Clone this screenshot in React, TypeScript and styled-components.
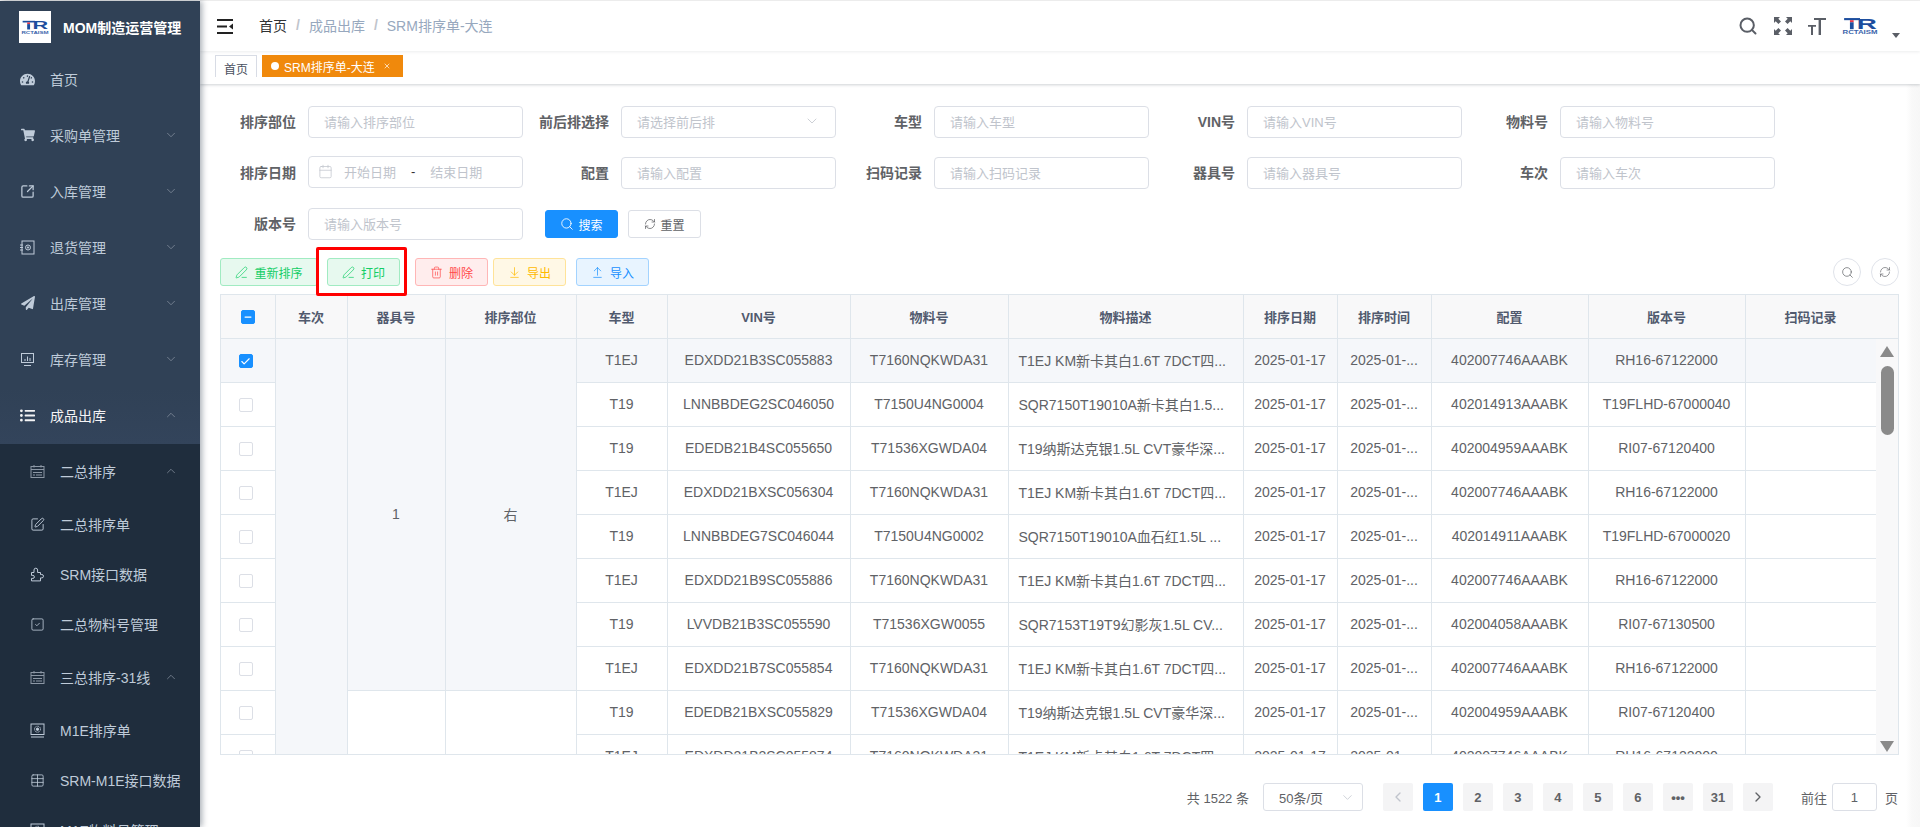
import React, { FC, ReactNode } from 'react';
import styled, { createGlobalStyle } from 'styled-components';
import {
  ChevronDown,
  ChevronUp,
  ChevronLeft,
  ChevronRight,
  Search,
  RefreshCw,
  PenLine,
  Trash2,
  ArrowDownToLine,
  ArrowUpFromLine,
  Calendar,
  Check,
  Minus,
  X,
  SquarePen,
  SquareCheck,
  Table,
} from 'lucide-react';
import { FaTachometerAlt, FaShoppingCart, FaPaperPlane, FaListUl } from 'react-icons/fa';
import { LuSquareArrowOutUpRight } from 'react-icons/lu';

const GlobalStyle = createGlobalStyle`
  html, body {
    margin: 0;
    padding: 0;
    height: 100%;
    overflow: hidden;
    background: #fff;
    font-family: "Liberation Sans", "Noto Sans CJK SC", sans-serif;
  }
`;

const Page = styled.div`
  display: flex;
  height: 827px;
  padding-top: 1px;
  box-sizing: border-box;
  background: #efefef;
`;

const Sidebar = styled.aside`
  flex: 0 0 200px;
  background: #304156;
  overflow: hidden;
  box-shadow: 2px 0 6px rgba(0, 21, 41, 0.35);
  z-index: 2;
`;

const Brand = styled.div`
  display: flex;
  align-items: center;
  height: 51px;
  padding-left: 19px;
  gap: 12px;
  color: #fff;
  font-size: 14px;
  font-weight: 700;
`;

const LogoBox = styled.div`
  display: flex;
  align-items: center;
  justify-content: center;
  width: 32px;
  height: 32px;
  background: #fff;
`;

const SubMenu = styled.div`
  background: #1f2d3d;
`;

const NavRow = styled.div<{ $height: number; $indent: number; $active?: boolean }>`
  display: flex;
  align-items: center;
  box-sizing: border-box;
  height: ${(p) => p.$height}px;
  padding: 0 20px 2px ${(p) => p.$indent}px;
  color: ${(p) => (p.$active ? '#f4f4f5' : '#bfcbd9')};
  font-size: 14px;
  background: ${(p) => (p.$active ? 'linear-gradient(#304156, #33445b)' : 'transparent')};
`;

const NavIcon = styled.span`
  display: flex;
  align-items: center;
  justify-content: center;
  width: 15px;
  margin-right: 15px;
`;

const NavLabel = styled.span`
  flex: 1;
  white-space: nowrap;
`;

const Arrow = styled.span`
  display: flex;
  color: #8c97a5;
  margin-right: 2px;
`;

const Main = styled.main`
  flex: 1;
  display: flex;
  flex-direction: column;
  min-width: 0;
  background: #fff;
`;

const TopBar = styled.header`
  display: flex;
  align-items: center;
  flex: 0 0 50px;
  padding: 0 20px 0 17px;
  background: #fff;
  box-shadow: 0 1px 3px rgba(0, 21, 41, 0.08);
  position: relative;
  z-index: 1;
`;

const Crumbs = styled.nav`
  display: flex;
  align-items: center;
  margin: 0 0 2px 25px;
  font-size: 14px;
  color: #97a8be;
`;

const CrumbHome = styled.span`
  color: #303133;
`;

const CrumbSlash = styled.span`
  margin: 0 9px;
  color: #c0c4cc;
  font-weight: 700;
`;

const TopTools = styled.div`
  display: flex;
  align-items: center;
  margin-left: auto;
  color: #5a5e66;
`;

const ToolSlot = styled.span`
  display: flex;
  margin-right: 16px;
`;

const AvatarCaret = styled.span`
  width: 0;
  height: 0;
  margin: 18px 0 0 14px;
  border-left: 4px solid transparent;
  border-right: 4px solid transparent;
  border-top: 5px solid #5a5e66;
`;

const TabsBar = styled.div`
  display: flex;
  align-items: flex-start;
  flex: 0 0 33px;
  padding: 4px 0 0 15px;
  box-sizing: border-box;
  background: #fff;
  box-shadow: 0 1px 3px rgba(0, 21, 41, 0.18), 0 0 3px rgba(0, 0, 0, 0.04);
  position: relative;
`;

const Tab = styled.div<{ $active?: boolean }>`
  display: flex;
  align-items: center;
  height: 22px;
  box-sizing: border-box;
  margin-right: 5px;
  padding: ${(p) => (p.$active ? '0 12px 0 9px' : '3px 8px 0')};
  font-size: 12px;
  color: ${(p) => (p.$active ? '#fff' : '#495060')};
  background: ${(p) => (p.$active ? '#f0890c' : '#fff')};
  border: ${(p) => (p.$active ? '0' : '1px solid #d8dce5')};
  border-bottom: 0;
`;

const TabDot = styled.i`
  width: 8px;
  height: 8px;
  margin-right: 5px;
  border-radius: 50%;
  background: #fff;
`;

const TabClose = styled.span`
  display: flex;
  margin-left: 8px;
`;

const Content = styled.section`
  display: flex;
  flex-direction: column;
  flex: 1;
  padding: 22px 21px 0 20px;
  background: linear-gradient(to left, #f7f7f7 0, #f9f9f9 8px, #fff 14px);
  min-height: 0;
`;

const FilterRow = styled.div`
  display: flex;
  align-items: center;
  height: 32px;
  margin-bottom: 19px;
`;

const FilterItem = styled.label`
  display: flex;
  align-items: center;
  width: 303px;
  margin-right: 10px;
`;

const FilterLabel = styled.span`
  flex: 0 0 76px;
  margin: -2px 12px 0 0;
  text-align: right;
  font-size: 14px;
  font-weight: 700;
  color: #606266;
  white-space: nowrap;
`;

const Field = styled.div<{ $lift?: boolean }>`
  display: flex;
  align-items: center;
  width: 215px;
  height: 32px;
  box-sizing: border-box;
  padding: 0 15px 2px;
  border: 1px solid #dcdfe6;
  border-radius: 4px;
  font-size: 13px;
  color: #c0c4cc;
  background: #fff;
  white-space: nowrap;
  margin-top: ${(p) => (p.$lift ? '-2px' : '0')};
`;

const FieldIcon = styled.span`
  display: flex;
  margin-left: auto;
  color: #c0c4cc;
`;

const DateIcon = styled.span`
  display: flex;
  margin: 0 11px 0 -6px;
`;

const DateDash = styled.span`
  margin: 0 15px;
  color: #303133;
`;

const QueryButton = styled.button<{ $primary?: boolean }>`
  display: flex;
  align-items: center;
  justify-content: center;
  gap: 4px;
  width: 73px;
  height: 28px;
  padding: 0;
  margin-right: 10px;
  border: 1px solid ${(p) => (p.$primary ? '#1890ff' : '#dcdfe6')};
  border-radius: 3px;
  background: ${(p) => (p.$primary ? '#1890ff' : '#fff')};
  color: ${(p) => (p.$primary ? '#fff' : '#606266')};
  font: 12px "Liberation Sans", "Noto Sans CJK SC", sans-serif;
`;

const QueryGroup = styled.div`
  display: flex;
  margin-left: 12px;
`;

const ActionBar = styled.div`
  display: flex;
  align-items: center;
  height: 28px;
  margin: -1px 0 8px;
  position: relative;
`;

const palette = {
  green: { bg: '#e7f9ef', border: '#a1ebc2', text: '#13ce66' },
  red: { bg: '#ffeded', border: '#ffb6b6', text: '#ff4949' },
  yellow: { bg: '#fff8e6', border: '#ffe399', text: '#ffba00' },
  blue: { bg: '#e8f4ff', border: '#a3d3ff', text: '#1890ff' },
};

const ActionButton = styled.button<{ $tone: keyof typeof palette; $width?: number; $gap?: number }>`
  display: flex;
  align-items: center;
  justify-content: center;
  gap: 6px;
  width: ${(p) => p.$width ?? 73}px;
  height: 28px;
  padding: 0;
  margin-left: ${(p) => p.$gap ?? 0}px;
  border: 1px solid ${(p) => palette[p.$tone].border};
  border-radius: 3px;
  background: ${(p) => palette[p.$tone].bg};
  color: ${(p) => palette[p.$tone].text};
  font: 12px "Liberation Sans", "Noto Sans CJK SC", sans-serif;
`;

const RedMark = styled.div`
  position: absolute;
  left: 96px;
  top: -11px;
  width: 91px;
  height: 49px;
  box-sizing: border-box;
  border: 3px solid #f00;
  border-radius: 2px;
`;

const RoundButton = styled.button<{ $first?: boolean }>`
  display: flex;
  align-items: center;
  justify-content: center;
  width: 28px;
  height: 28px;
  padding: 0;
  margin-left: ${(p) => (p.$first ? 'auto' : '10px')};
  border: 1px solid #e0e3ea;
  border-radius: 50%;
  background: #fff;
  color: #606266;
`;

const TableShell = styled.div`
  display: flex;
  flex: 0 0 461px;
  height: 461px;
  box-sizing: border-box;
  border: 1px solid #dfe6ec;
`;

const TableViewport = styled.div`
  flex: 0 0 1655px;
  overflow: hidden;
`;

const Grid = styled.table`
  width: 1655px;
  table-layout: fixed;
  border-collapse: collapse;
  font-size: 14px;
  color: #606266;
`;

const GridCol = styled.col<{ $width: number }>`
  width: ${(p) => p.$width}px;
`;

const HeadCell = styled.th`
  height: 43px;
  padding: 0;
  background: #f8f8f9;
  border-right: 1px solid #dfe6ec;
  border-bottom: 1px solid #dfe6ec;
  box-sizing: border-box;
  font-size: 13px;
  font-weight: 700;
  color: #515a6e;
  text-align: center;
`;

const Cell = styled.td<{ $shade?: boolean; $left?: boolean }>`
  height: 44px;
  padding: 0 ${(p) => (p.$left ? '0 0 10px' : '0')};
  background: ${(p) => (p.$shade ? '#f5f7fa' : '#fff')};
  border-right: 1px solid #dfe6ec;
  border-bottom: 1px solid #dfe6ec;
  box-sizing: border-box;
  text-align: ${(p) => (p.$left ? 'left' : 'center')};
  white-space: nowrap;
  overflow: hidden;
`;

const Gutter = styled.div`
  display: flex;
  flex-direction: column;
  align-items: center;
  flex: 1;
  background: #f8f8f9;
`;

const GutterHead = styled.div`
  align-self: stretch;
  flex: 0 0 43px;
  border-bottom: 1px solid #dfe6ec;
`;

const ArrowUp = styled.i`
  margin-top: 7px;
  width: 0;
  height: 0;
  border-left: 7px solid transparent;
  border-right: 7px solid transparent;
  border-bottom: 11px solid #8a8a8a;
`;

const ArrowDown = styled.i`
  margin-top: auto;
  margin-bottom: 2px;
  width: 0;
  height: 0;
  border-left: 7px solid transparent;
  border-right: 7px solid transparent;
  border-top: 11px solid #8a8a8a;
`;

const Thumb = styled.i`
  margin-top: 9px;
  width: 13px;
  height: 69px;
  border-radius: 7px;
  background: #8a8a8a;
`;

const Box = styled.span<{ $on?: boolean; $nudge: number }>`
  display: inline-flex;
  align-items: center;
  justify-content: center;
  vertical-align: middle;
  width: 14px;
  height: 14px;
  box-sizing: border-box;
  margin-right: ${(p) => p.$nudge}px;
  border: 1px solid ${(p) => (p.$on ? '#1890ff' : '#dcdfe6')};
  border-radius: 2px;
  background: ${(p) => (p.$on ? '#1890ff' : '#fff')};
  color: #fff;
`;

const Pager = styled.footer`
  display: flex;
  align-items: center;
  justify-content: flex-end;
  height: 28px;
  margin-top: 28px;
  padding-right: 1px;
  font-size: 13px;
  color: #606266;
`;

const PagerTotal = styled.span`
  margin-right: 14px;
`;

const PageSize = styled.div`
  display: flex;
  align-items: center;
  justify-content: space-between;
  width: 100px;
  height: 28px;
  box-sizing: border-box;
  margin-right: 15px;
  padding: 0 7px 0 15px;
  border: 1px solid #dcdfe6;
  border-radius: 3px;
  color: #606266;
`;

const PageSizeArrow = styled.span`
  display: flex;
  color: #c0c4cc;
`;

const PageButton = styled.button<{ $current?: boolean; $off?: boolean }>`
  display: flex;
  align-items: center;
  justify-content: center;
  width: 30px;
  height: 28px;
  padding: 0;
  margin: 0 5px;
  border: 0;
  border-radius: 2px;
  background: ${(p) => (p.$current ? '#1890ff' : '#f4f4f5')};
  color: ${(p) => (p.$current ? '#fff' : p.$off ? '#c0c4cc' : '#606266')};
  font: 700 13px "Liberation Sans", "Noto Sans CJK SC", sans-serif;
`;

const JumpLabel = styled.span`
  margin-left: 23px;
`;

const JumpBox = styled.span`
  display: flex;
  align-items: center;
  justify-content: center;
  width: 45px;
  height: 28px;
  box-sizing: border-box;
  margin: 0 8px 0 5px;
  border: 1px solid #dcdfe6;
  border-radius: 3px;
`;

// small drawings that the icon packages don't have
const TrLogo: FC<{ width: number }> = ({ width }) => (
  <svg width={width} height={width / 2} viewBox="0 0 68 34">
    <rect x="4" y="2" width="30" height="4" fill="#1d4e9e" />
    <rect x="15" y="6" width="7" height="4" fill="#e4364a" />
    <rect x="15" y="10" width="7" height="13" fill="#1d4e9e" />
    <text x="28" y="23" fontFamily="Liberation Sans" fontWeight="700" fontSize="27" fill="#1d4e9e" textLength="38" lengthAdjust="spacingAndGlyphs">R</text>
    <text x="1" y="33" fontFamily="Liberation Sans" fontWeight="700" fontSize="9" fill="#3b64ab" textLength="66" lengthAdjust="spacingAndGlyphs">RCTAISM</text>
  </svg>
);

const MenuToggle = () => (
  <svg width="17" height="15" viewBox="0 0 17 15" fill="#222">
    <rect x="0" y="0" width="16" height="2" />
    <rect x="0" y="6.5" width="10" height="2" />
    <rect x="0" y="13" width="16" height="2" />
    <path d="M16 4.5v6l-4-3z" />
  </svg>
);

const FullscreenIcon = () => (
  <svg width="18" height="18" viewBox="0 0 18 18" fill="#5a5e66">
    <path d="M0 0h6L4.3 1.7 7 4.4 4.4 7 1.7 4.3 0 6zM18 0v6l-1.700-1.700L13.600 7 11 4.400l2.700-2.700L12 0zM0 18v-6l1.700 1.700L4.400 11 7 13.600l-2.700 2.700L6 18zM18 18h-6l1.700-1.700L11 13.600 13.600 11l2.700 2.700L18 12z" />
  </svg>
);

const SizeIcon = () => (
  <svg width="18" height="18" viewBox="0 0 18 18" fill="#5a5e66">
    <path d="M6 1h12v2h-5v15h-2.400V3H6z" />
    <path d="M0 8h8v1.800H5V18H3V9.800H0z" />
  </svg>
);

const SafeIcon = () => (
  <svg width="15" height="15" viewBox="0 0 15 15" fill="none" stroke="#bfcbd9">
    <rect x="2" y="1" width="12" height="13" />
    <circle cx="8" cy="7.500" r="2.500" />
    <circle cx="8" cy="7.500" r="0.700" fill="#bfcbd9" />
    <path d="M0 5h3M0 7.500h3M0 10h3" />
  </svg>
);

const MonitorIcon = () => (
  <svg width="15" height="15" viewBox="0 0 15 15" fill="none" stroke="#bfcbd9">
    <rect x="1.500" y="1.500" width="12" height="9" />
    <path d="M4 13.500h7M5 9V7M7.500 9V4.500M10 9V6" />
  </svg>
);

const CalendarChip = () => (
  <svg width="15" height="15" viewBox="0 0 15 15" fill="none" stroke="#8c97a5">
    <rect x="1" y="2.500" width="13" height="11" />
    <path d="M1 5.500h13M4 1v2.500M11 1v2.500M3 8.500h9M3 11h2M6 11h6" />
  </svg>
);

const ChipScreen = () => (
  <svg width="15" height="15" viewBox="0 0 15 15" fill="none" stroke="#bfcbd9">
    <rect x="1" y="1" width="13" height="10.500" />
    <circle cx="7.500" cy="6.200" r="3" strokeDasharray="1 0.600" />
    <circle cx="7.500" cy="6.200" r="1.200" fill="#bfcbd9" />
    <path d="M1 14h13" />
  </svg>
);

const PuzzlePiece = () => (
  <svg width="15" height="15" viewBox="0 0 15 15" fill="none" stroke="#bfcbd9">
    <path d="M1.500 5.500H4V3a1.800 1.800 0 0 1 3.600 0v2.500h2.900v2h1.300a1.700 1.700 0 0 1 0 3.400h-1.300v3H1.500v-2.500h1.400a1.500 1.500 0 0 0 0-3H1.500z" />
  </svg>
);

type NavEntry = { label: string; icon: ReactNode; arrow?: 'up' | 'down'; active?: boolean };

const topNav: NavEntry[] = [
  { label: '首页', icon: <FaTachometerAlt size={15} /> },
  { label: '采购单管理', icon: <FaShoppingCart size={14} />, arrow: 'down' },
  { label: '入库管理', icon: <LuSquareArrowOutUpRight size={15} />, arrow: 'down' },
  { label: '退货管理', icon: <SafeIcon />, arrow: 'down' },
  { label: '出库管理', icon: <FaPaperPlane size={14} />, arrow: 'down' },
  { label: '库存管理', icon: <MonitorIcon />, arrow: 'down' },
  { label: '成品出库', icon: <FaListUl size={15} color="#f4f4f5" />, arrow: 'up', active: true },
];

const subNav: (NavEntry & { group?: boolean })[] = [
  { label: '二总排序', icon: <CalendarChip />, arrow: 'up', group: true },
  { label: '二总排序单', icon: <SquarePen size={15} strokeWidth={1.5} /> },
  { label: 'SRM接口数据', icon: <PuzzlePiece /> },
  { label: '二总物料号管理', icon: <SquareCheck size={15} strokeWidth={1.3} /> },
  { label: '三总排序-31线', icon: <CalendarChip />, arrow: 'up', group: true },
  { label: 'M1E排序单', icon: <ChipScreen /> },
  { label: 'SRM-M1E接口数据', icon: <Table size={15} strokeWidth={1.3} /> },
  { label: 'M1E物料号管理', icon: <ChipScreen /> },
];

const firstRow: [string, string][] = [
  ['排序部位', '请输入排序部位'],
  ['前后排选择', '请选择前后排'],
  ['车型', '请输入车型'],
  ['VIN号', '请输入VIN号'],
  ['物料号', '请输入物料号'],
];

const secondRow: [string, string][] = [
  ['配置', '请输入配置'],
  ['扫码记录', '请输入扫码记录'],
  ['器具号', '请输入器具号'],
  ['车次', '请输入车次'],
];

const columnWidths = [54, 72, 98, 131, 91, 183, 158, 235, 94, 94, 157, 157, 131];
const heads = ['车次', '器具号', '排序部位', '车型', 'VIN号', '物料号', '物料描述', '排序日期', '排序时间', '配置', '版本号', '扫码记录'];

const km = ['T1EJ', 'T7160NQKWDA31', 'T1EJ KM新卡其白1.6T 7DCT四...', '402007746AAABK', 'RH16-67122000'];

const rows = [
  { type: km[0], vin: 'EDXDD21B3SC055883', part: km[1], desc: km[2], conf: km[3], ver: km[4] },
  { type: 'T19', vin: 'LNNBBDEG2SC046050', part: 'T7150U4NG0004', desc: 'SQR7150T19010A新卡其白1.5...', conf: '402014913AAABK', ver: 'T19FLHD-67000040' },
  { type: 'T19', vin: 'EDEDB21B4SC055650', part: 'T71536XGWDA04', desc: 'T19纳斯达克银1.5L CVT豪华深...', conf: '402004959AAABK', ver: 'RI07-67120400' },
  { type: km[0], vin: 'EDXDD21BXSC056304', part: km[1], desc: km[2], conf: km[3], ver: km[4] },
  { type: 'T19', vin: 'LNNBBDEG7SC046044', part: 'T7150U4NG0002', desc: 'SQR7150T19010A血石红1.5L ...', conf: '402014911AAABK', ver: 'T19FLHD-67000020' },
  { type: km[0], vin: 'EDXDD21B9SC055886', part: km[1], desc: km[2], conf: km[3], ver: km[4] },
  { type: 'T19', vin: 'LVVDB21B3SC055590', part: 'T71536XGW0055', desc: 'SQR7153T19T9幻影灰1.5L CV...', conf: '402004058AAABK', ver: 'RI07-67130500' },
  { type: km[0], vin: 'EDXDD21B7SC055854', part: km[1], desc: km[2], conf: km[3], ver: km[4] },
  { type: 'T19', vin: 'EDEDB21BXSC055829', part: 'T71536XGWDA04', desc: 'T19纳斯达克银1.5L CVT豪华深...', conf: '402004959AAABK', ver: 'RI07-67120400' },
  { type: km[0], vin: 'EDXDD21B2SC055874', part: km[1], desc: km[2], conf: km[3], ver: km[4] },
];

const pages = ['2', '3', '4', '5', '6', '•••', '31'];

const NavLine: FC<{ entry: NavEntry; height: number; indent: number }> = ({ entry, height, indent }) => (
  <NavRow $height={height} $indent={indent} $active={entry.active}>
    <NavIcon>{entry.icon}</NavIcon>
    <NavLabel>{entry.label}</NavLabel>
    {entry.arrow && <Arrow>{entry.arrow === 'up' ? <ChevronUp size={14} strokeWidth={1.2} /> : <ChevronDown size={14} strokeWidth={1.2} />}</Arrow>}
  </NavRow>
);

const App: FC = () => (
  <Page>
    <GlobalStyle />
    <Sidebar>
      <Brand>
        <LogoBox>
          <TrLogo width={28} />
        </LogoBox>
        MOM制造运营管理
      </Brand>
      {topNav.map((entry) => (
        <NavLine key={entry.label} entry={entry} height={56} indent={20} />
      ))}
      <SubMenu>
        {subNav.map((entry) => (
          <NavLine key={entry.label} entry={entry} height={entry.group ? 56 : 50} indent={30} />
        ))}
      </SubMenu>
    </Sidebar>

    <Main>
      <TopBar>
        <MenuToggle />
        <Crumbs>
          <CrumbHome>首页</CrumbHome>
          <CrumbSlash>/</CrumbSlash>
          成品出库
          <CrumbSlash>/</CrumbSlash>
          SRM排序单-大连
        </Crumbs>
        <TopTools>
          <ToolSlot><Search size={20} strokeWidth={2.4} /></ToolSlot>
          <ToolSlot><FullscreenIcon /></ToolSlot>
          <ToolSlot><SizeIcon /></ToolSlot>
          <TrLogo width={36} />
          <AvatarCaret />
        </TopTools>
      </TopBar>

      <TabsBar>
        <Tab>首页</Tab>
        <Tab $active>
          <TabDot />
          SRM排序单-大连
          <TabClose><X size={8} strokeWidth={2} /></TabClose>
        </Tab>
      </TabsBar>

      <Content>
        <FilterRow>
          {firstRow.map(([label, hint], i) => (
            <FilterItem key={label}>
              <FilterLabel>{label}</FilterLabel>
              <Field>
                {hint}
                {i === 1 && <FieldIcon><ChevronDown size={16} strokeWidth={1.2} /></FieldIcon>}
              </Field>
            </FilterItem>
          ))}
        </FilterRow>

        <FilterRow>
          <FilterItem>
            <FilterLabel>排序日期</FilterLabel>
            <Field $lift>
              <DateIcon><Calendar size={15} strokeWidth={1.2} /></DateIcon>
              开始日期
              <DateDash>-</DateDash>
              结束日期
            </Field>
          </FilterItem>
          {secondRow.map(([label, hint]) => (
            <FilterItem key={label}>
              <FilterLabel>{label}</FilterLabel>
              <Field>{hint}</Field>
            </FilterItem>
          ))}
        </FilterRow>

        <FilterRow>
          <FilterItem>
            <FilterLabel>版本号</FilterLabel>
            <Field>请输入版本号</Field>
          </FilterItem>
          <QueryGroup>
            <QueryButton $primary><Search size={14} strokeWidth={1.5} />搜索</QueryButton>
            <QueryButton><RefreshCw size={12} strokeWidth={1.5} />重置</QueryButton>
          </QueryGroup>
        </FilterRow>

        <ActionBar>
          <ActionButton $tone="green" $width={98}><PenLine size={13} strokeWidth={1.3} />重新排序</ActionButton>
          <ActionButton $tone="green" $gap={9}><PenLine size={13} strokeWidth={1.3} />打印</ActionButton>
          <ActionButton $tone="red" $gap={15}><Trash2 size={13} strokeWidth={1.3} />删除</ActionButton>
          <ActionButton $tone="yellow" $gap={5}><ArrowDownToLine size={13} strokeWidth={1.3} />导出</ActionButton>
          <ActionButton $tone="blue" $gap={10}><ArrowUpFromLine size={13} strokeWidth={1.3} />导入</ActionButton>
          <RedMark />
          <RoundButton $first><Search size={13} strokeWidth={1.3} /></RoundButton>
          <RoundButton><RefreshCw size={12} strokeWidth={1.3} /></RoundButton>
        </ActionBar>

        <TableShell>
          <TableViewport>
            <Grid>
              <colgroup>
                {columnWidths.map((w, i) => <GridCol key={i} $width={w} />)}
              </colgroup>
              <thead>
                <tr>
                  <HeadCell>
                    <Box $on $nudge={0}><Minus size={10} strokeWidth={3} /></Box>
                  </HeadCell>
                  {heads.map((h) => <HeadCell key={h}>{h}</HeadCell>)}
                </tr>
              </thead>
              <tbody>
                {rows.map((r, i) => {
                  const shade = i === 0;
                  return (
                    <tr key={r.vin}>
                      <Cell $shade={shade}>
                        <Box $on={shade} $nudge={4}>{shade && <Check size={11} strokeWidth={2.5} />}</Box>
                      </Cell>
                      {i === 0 && <Cell $shade rowSpan={10} />}
                      {i === 0 && <Cell $shade rowSpan={8}>1</Cell>}
                      {i === 0 && <Cell $shade rowSpan={8}>右</Cell>}
                      {i === 8 && <Cell rowSpan={2} />}
                      {i === 8 && <Cell rowSpan={2} />}
                      <Cell $shade={shade}>{r.type}</Cell>
                      <Cell $shade={shade}>{r.vin}</Cell>
                      <Cell $shade={shade}>{r.part}</Cell>
                      <Cell $shade={shade} $left>{r.desc}</Cell>
                      <Cell $shade={shade}>2025-01-17</Cell>
                      <Cell $shade={shade}>2025-01-...</Cell>
                      <Cell $shade={shade}>{r.conf}</Cell>
                      <Cell $shade={shade}>{r.ver}</Cell>
                      <Cell $shade={shade} />
                    </tr>
                  );
                })}
              </tbody>
            </Grid>
          </TableViewport>
          <Gutter>
            <GutterHead />
            <ArrowUp />
            <Thumb />
            <ArrowDown />
          </Gutter>
        </TableShell>

        <Pager>
          <PagerTotal>共 1522 条</PagerTotal>
          <PageSize>
            50条/页
            <PageSizeArrow><ChevronDown size={15} strokeWidth={1.2} /></PageSizeArrow>
          </PageSize>
          <PageButton $off><ChevronLeft size={16} strokeWidth={2} /></PageButton>
          <PageButton $current>1</PageButton>
          {pages.map((p) => <PageButton key={p}>{p}</PageButton>)}
          <PageButton><ChevronRight size={16} strokeWidth={2} /></PageButton>
          <JumpLabel>前往</JumpLabel>
          <JumpBox>1</JumpBox>
          页
        </Pager>
      </Content>
    </Main>
  </Page>
);

export default App;
